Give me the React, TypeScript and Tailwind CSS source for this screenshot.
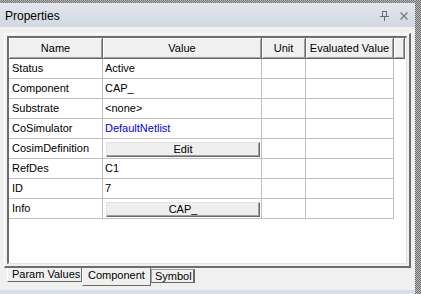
import React from "react";

const rows: { name: string; value: string; kind?: "link" | "button" }[] = [
  { name: "Status", value: "Active" },
  { name: "Component", value: "CAP_" },
  { name: "Substrate", value: "<none>" },
  { name: "CoSimulator", value: "DefaultNetlist", kind: "link" },
  { name: "CosimDefinition", value: "Edit", kind: "button" },
  { name: "RefDes", value: "C1" },
  { name: "ID", value: "7" },
  { name: "Info", value: "CAP_", kind: "button" },
];

const checker =
  "bg-[repeating-conic-gradient(#6e6e6e_0%_25%,#bdbdbd_0%_50%)] bg-[length:2px_2px]";

function HeaderCell({ w, label }: { w: string; label?: string }) {
  return (
    <div
      className={`${w} h-full flex items-center justify-center bg-[#f0f0f0] border-r border-b border-[#696969] shadow-[inset_1px_1px_0_#ffffff,inset_-1px_-1px_0_#a0a0a0]`}
    >
      {label}
    </div>
  );
}

function Row({ name, value, kind }: { name: string; value: string; kind?: "link" | "button" }) {
  return (
    <div className="flex h-[20px]">
      <div className="w-[94px] flex items-center pl-[3px] border-r border-b border-[#c0c0c0]">{name}</div>
      {kind === "button" ? (
        <div className="w-[159px] flex pl-[3px] pr-[1px] pt-[3px] pb-[1px] border-r border-b border-[#c0c0c0]">
          <div className="flex-1 flex items-center justify-center bg-[#efefef] border-t border-l border-[#e3e3e3] border-r border-b border-r-[#696969] border-b-[#696969] shadow-[inset_-1px_-1px_0_#a0a0a0]">
            {value}
          </div>
        </div>
      ) : (
        <div
          className={`w-[159px] flex items-center pl-[2px] border-r border-b border-[#c0c0c0] ${
            kind === "link" ? "text-[#0000ff]" : ""
          }`}
        >
          {value}
        </div>
      )}
      <div className="w-[44px] border-r border-b border-[#c0c0c0]" />
      <div className="w-[88px] border-r border-b border-[#c0c0c0]" />
    </div>
  );
}

export default function App() {
  return (
    <div className="w-[421px] h-[294px] flex overflow-hidden bg-[#f0f0f0] text-[11px] text-black font-['Liberation_Sans',Arial,sans-serif]">
      <div className="w-[415px] flex flex-col">
        <div className={`h-[3px] ${checker}`} />

        {/* title bar */}
        <div className="h-[24px] flex items-center pl-[5px] pr-[7px] bg-gradient-to-b from-[#e2e6ec] to-[#d2d8e0]">
          <span className="text-[12px] pt-[1px]">Properties</span>
          <div className="ml-auto flex items-center gap-[11px]">
            <svg width="9" height="10" viewBox="0 0 9 10" className="mt-[1px]">
              <rect x="2.5" y="0.5" width="4" height="5" fill="none" stroke="#6c6c6c" />
              <line x1="0" y1="5.5" x2="9" y2="5.5" stroke="#6c6c6c" />
              <line x1="4.5" y1="6" x2="4.5" y2="10" stroke="#6c6c6c" />
            </svg>
            <svg width="8" height="8" viewBox="0 0 8 8" className="mt-[2px]">
              <path d="M0.5 0.5 L7.5 7.5 M7.5 0.5 L0.5 7.5" stroke="#777" strokeWidth="1.2" />
            </svg>
          </div>
        </div>

        {/* content */}
        <div className="flex-1 flex flex-col pt-[6px] pl-[4px]">
          <div className="w-[407px] h-[235px] p-[2px] border-t border-l border-white border-r-2 border-b-2 border-r-[#6d6d6d] border-b-[#6d6d6d]">
            <div className="h-full bg-white border-t-2 border-l-2 border-[#6d6d6d] border-r border-b border-r-[#e3e3e3] border-b-[#e3e3e3]">
              <div className="flex h-[21px]">
                <HeaderCell w="w-[94px]" label="Name" />
                <HeaderCell w="w-[159px]" label="Value" />
                <HeaderCell w="w-[44px]" label="Unit" />
                <HeaderCell w="w-[88px]" label="Evaluated Value" />
                <HeaderCell w="w-[11px]" />
              </div>
              {rows.map((r) => (
                <Row key={r.name} {...r} />
              ))}
            </div>
          </div>

          {/* tabs */}
          <div className="flex items-start pl-[3px] h-[18px] whitespace-nowrap">
            <div className="shrink-0 h-[14px] w-[75px] flex items-center pl-[4px] border-l border-l-white border-r border-b border-r-[#696969] border-b-[#696969]">
              Param Values
            </div>
            <div className="shrink-0 h-[18px] w-[69px] flex items-end pb-[2px] pl-[5px] border-l border-l-white border-r border-b border-r-[#696969] border-b-[#696969]">
              Component
            </div>
            <div className="shrink-0 h-[14px] w-[44px] mt-[1px] flex items-center pl-[3px] border-t border-l border-t-[#a0a0a0] border-l-[#a0a0a0] border-r-2 border-b border-r-[#696969] border-b-[#696969]">
              Symbol
            </div>
          </div>
        </div>

        <div className="h-[4px] bg-[#d9dde6]" />
      </div>
      <div className={`w-[6px] h-full ${checker}`} />
    </div>
  );
}
